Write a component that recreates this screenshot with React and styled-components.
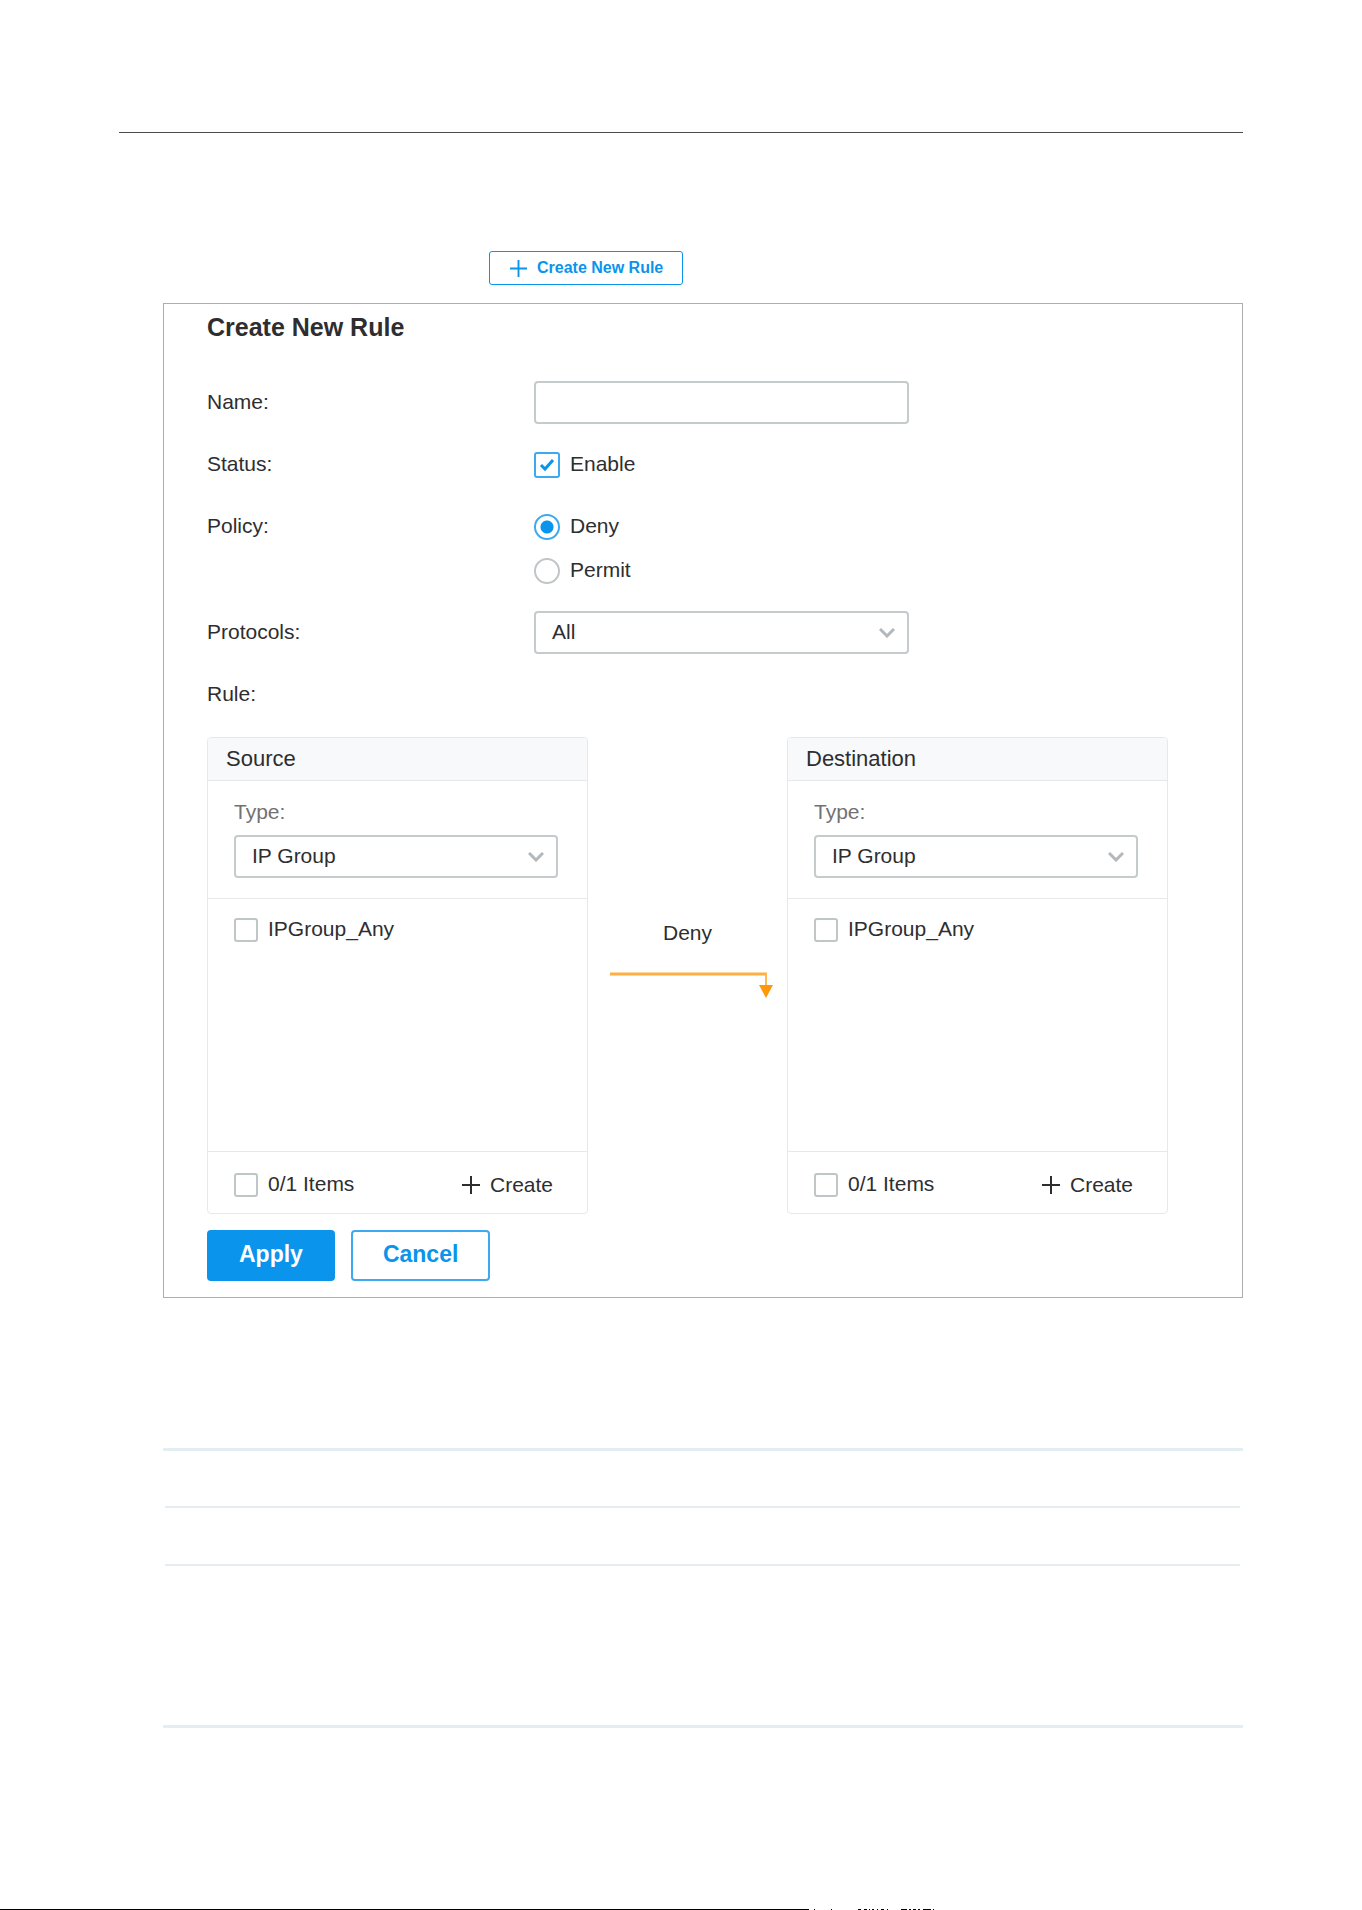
import React from "react";
import styled, { createGlobalStyle } from "styled-components";

const GlobalStyle = createGlobalStyle`
  * {
    box-sizing: border-box;
  }
  body {
    margin: 0;
    background: #fff;
    color: #2e2e30;
    font-family: "Liberation Sans", Arial, sans-serif;
    font-size: 21px;
    line-height: 24px;
  }
  button, input, select {
    margin: 0;
    font: inherit;
    color: inherit;
  }
`;

const Page = styled.main`
  padding-top: 132px;
`;

const Sheet = styled.div`
  margin: 0 119px;
  padding: 118px 0 181px 44px;
  border-top: 1px solid #4a4a4c;
`;

const CreateButton = styled.button`
  display: flex;
  align-items: center;
  gap: 10px;
  height: 34px;
  margin-left: 326px;
  padding: 0 19px 0 20px;
  border: 1px solid #0a94ec;
  border-radius: 3px;
  background: #fff;
  color: #0a94ec;
  font-size: 16px;
  font-weight: bold;
  line-height: 18px;
  white-space: nowrap;
`;

const Panel = styled.form`
  margin-top: 18px;
  padding: 9px 74px 16px 43px;
  border: 1px solid #adadaf;
`;

const Title = styled.h1`
  margin: 0 0 40px;
  font-size: 25px;
  line-height: 28px;
`;

const Fields = styled.div`
  display: grid;
  gap: 19px;
`;

const Field = styled.div`
  display: grid;
  grid-template-columns: 327px minmax(0, 375px);
`;

const FieldName = styled.label`
  display: flex;
  align-items: center;
  height: 43px;
  padding-bottom: 2px;
`;

const TextInput = styled.input`
  width: 100%;
  height: 43px;
  padding: 0 15px;
  border: 2px solid #c5cacd;
  border-radius: 4px;
  background: #fff;
`;

const Choices = styled.div`
  display: grid;
  gap: 1px;
`;

const Choice = styled.label`
  display: flex;
  align-items: center;
  gap: 10px;
  height: ${props => (props.$compact ? "24px" : "43px")};
`;

const ChoiceText = styled.span`
  padding-bottom: 2px;
`;

const Mark = styled.span`
  display: grid;
  width: ${props => (props.$compact ? "24px" : "26px")};
  height: ${props => (props.$compact ? "24px" : "26px")};
  place-items: center;

  input {
    grid-area: 1 / 1;
    width: 100%;
    height: 100%;
    appearance: none;
    border: 2px solid #c0c5c8;
    border-radius: 3px;
    background: #fff;
  }
  input[type="radio"] {
    border-radius: 50%;
  }
  input:checked {
    border: 2px solid #3da9f0;
  }
  input[type="radio"]:checked {
    background: radial-gradient(circle, #0a94ec 6px, #fff 7px);
  }
  svg {
    grid-area: 1 / 1;
    pointer-events: none;
  }
  input:not(:checked) + svg {
    visibility: hidden;
  }
`;

const SelectBox = styled.div`
  display: grid;
  align-items: center;

  select {
    grid-area: 1 / 1;
    width: 100%;
    height: 43px;
    padding: 0 40px 2px 16px;
    appearance: none;
    border: 2px solid #c5cacd;
    border-radius: 4px;
    background: #fff;
  }
  svg {
    grid-area: 1 / 1;
    justify-self: end;
    margin-right: 14px;
    pointer-events: none;
  }
`;

const RuleMap = styled.div`
  display: grid;
  grid-template-columns: 381px 1fr 381px;
  margin-top: 21px;
`;

const Card = styled.section`
  border: 1px solid #e6e9ea;
  border-radius: 4px;
  overflow: hidden;
`;

const CardTitle = styled.h2`
  margin: 0;
  padding: 8px 18px;
  border-bottom: 1px solid #e6e9ea;
  background: #f7f9fb;
  font-size: 22px;
  font-weight: normal;
  line-height: 26px;
`;

const TypeBlock = styled.div`
  display: grid;
  gap: 11px;
  padding: 19px 29px 20px 26px;
  border-bottom: 1px solid #e6e9ea;

  label {
    color: #727274;
  }
`;

const GroupList = styled.div`
  min-height: 252px;
  padding: 19px 26px;
`;

const CardFooter = styled.div`
  display: flex;
  align-items: center;
  justify-content: space-between;
  padding: 21px 34px 16px 26px;
  border-top: 1px solid #e6e9ea;
`;

const AddButton = styled.button`
  display: flex;
  align-items: center;
  gap: 10px;
  padding: 0;
  border: 0;
  background: none;
`;

const Flow = styled.div`
  display: flex;
  flex-direction: column;
  align-items: center;
  gap: 26px;
  padding-top: 184px;
`;

const Actions = styled.div`
  display: flex;
  gap: 16px;
  margin-top: 16px;
`;

const ActionButton = styled.button`
  height: 51px;
  padding: 0 30px 3px;
  border: 2px solid ${props => (props.$primary ? "#0a94ec" : "#3da9f0")};
  border-radius: 4px;
  background: ${props => (props.$primary ? "#0a94ec" : "#fff")};
  color: ${props => (props.$primary ? "#fff" : "#0a94ec")};
  font-size: 23px;
  font-weight: bold;
  line-height: 26px;
`;

const Lines = styled.div`
  margin-top: 150px;
  border-top: 3px solid #e4edf1;
  border-bottom: 3px solid #e4edf1;
`;

const Line = styled.div`
  height: ${props => (props.$last ? "159px" : props.$first ? "57px" : "58px")};
  margin: 0 3px 0 2px;
  border-bottom: ${props => (props.$last ? "0" : "2px solid #e4edf1")};
`;

const PageEdge = styled.footer`
  display: grid;
  grid-template-columns: 809fr 553fr;
  height: 1px;
`;

const EdgeLine = styled.div`
  background: #000;
`;

const Plus = ({ size, stroke }) => (
  <svg width={size} height={size} viewBox="0 0 18 18" aria-hidden="true">
    <path d="M9 0V18M0 9H18" stroke="currentColor" strokeWidth={stroke} />
  </svg>
);

const Tick = () => (
  <svg width="16" height="14" viewBox="0 0 16 14" aria-hidden="true">
    <path d="M2 7L6 11L14 2" fill="none" stroke="#0a94ec" strokeWidth="3" />
  </svg>
);

const Select = ({ id, value }) => (
  <SelectBox>
    <select id={id} defaultValue={value}>
      <option>{value}</option>
    </select>
    <svg width="16" height="10" viewBox="0 0 16 10" aria-hidden="true">
      <path d="M1 1L8 8L15 1" fill="none" stroke="#b3b8bb" strokeWidth="3" />
    </svg>
  </SelectBox>
);

const Check = ({ text, compact, type = "checkbox", ...rest }) => (
  <Choice $compact={compact}>
    <Mark $compact={compact}>
      <input type={type} {...rest} />
      {type === "checkbox" && <Tick />}
    </Mark>
    <ChoiceText>{text}</ChoiceText>
  </Choice>
);

const GroupCard = ({ id, title }) => (
  <Card>
    <CardTitle>{title}</CardTitle>
    <TypeBlock>
      <label htmlFor={id}>Type:</label>
      <Select id={id} value="IP Group" />
    </TypeBlock>
    <GroupList>
      <Check compact text="IPGroup_Any" />
    </GroupList>
    <CardFooter>
      <Check compact text="0/1 Items" />
      <AddButton type="button">
        <Plus size={18} stroke={2} />
        Create
      </AddButton>
    </CardFooter>
  </Card>
);

class App extends React.Component {
  state = { policy: "Deny" };

  render() {
    const { policy } = this.state;
    return (
      <Page>
        <GlobalStyle />
        <Sheet>
          <CreateButton type="button">
            <Plus size={17} stroke={2} />
            Create New Rule
          </CreateButton>
          <Panel onSubmit={e => e.preventDefault()}>
            <Title>Create New Rule</Title>
            <Fields>
              <Field>
                <FieldName htmlFor="name">Name:</FieldName>
                <TextInput id="name" type="text" />
              </Field>
              <Field>
                <FieldName as="span">Status:</FieldName>
                <Check text="Enable" defaultChecked />
              </Field>
              <Field>
                <FieldName as="span">Policy:</FieldName>
                <Choices>
                  {["Deny", "Permit"].map(item => (
                    <Check
                      key={item}
                      type="radio"
                      name="policy"
                      text={item}
                      checked={policy === item}
                      onChange={() => this.setState({ policy: item })}
                    />
                  ))}
                </Choices>
              </Field>
              <Field>
                <FieldName htmlFor="protocols">Protocols:</FieldName>
                <Select id="protocols" value="All" />
              </Field>
              <Field>
                <FieldName as="span">Rule:</FieldName>
              </Field>
            </Fields>
            <RuleMap>
              <GroupCard id="source" title="Source" />
              <Flow>
                {policy}
                <svg width="172" height="28" viewBox="-8 0 172 28" aria-hidden="true">
                  <path d="M0 3H157" stroke="#ffae42" strokeWidth="3" />
                  <path d="M156 3V16" stroke="#ffb95c" strokeWidth="2" />
                  <path d="M149 14H163L156 27Z" fill="#ff9808" />
                </svg>
              </Flow>
              <GroupCard id="destination" title="Destination" />
            </RuleMap>
            <Actions>
              <ActionButton $primary type="submit">
                Apply
              </ActionButton>
              <ActionButton type="button">Cancel</ActionButton>
            </Actions>
          </Panel>
          <Lines>
            <Line $first />
            <Line />
            <Line $last />
          </Lines>
        </Sheet>
        <PageEdge>
          <EdgeLine />
          <svg width="126" height="1" viewBox="0 0 126 1" aria-hidden="true">
            <path
              d="M5 .5h1M22 .5h1M49 .5h3M55 .5h3M60 .5h1M63 .5h2M68 .5h1M72 .5h3M78 .5h1M92 .5h6M100 .5h2M104 .5h3M109 .5h2M114 .5h8M124 .5h1"
              stroke="#000"
            />
          </svg>
        </PageEdge>
      </Page>
    );
  }
}
export default App;
